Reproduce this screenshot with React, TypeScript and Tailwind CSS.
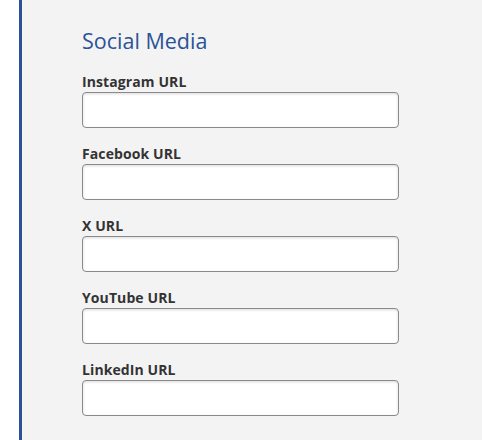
const fields = ["Instagram URL", "Facebook URL", "X URL", "YouTube URL", "LinkedIn URL"];

export default function App() {
  return (
    <div className="flex h-[440px] w-[482px] overflow-hidden bg-white font-['Open_Sans',sans-serif]">
      <div className="ml-[19px] h-full w-[3px] bg-[#2b5297]" />
      <div className="h-full flex-1 bg-[#f3f3f3] pl-[60px] pt-[26px]">
        <h2 className="text-[21.5px] leading-[30px] text-[#2b5297]">Social Media</h2>
        <div className="mt-[16px] flex flex-col gap-[16px]">
          {fields.map((f) => (
            <div key={f} className="flex flex-col">
              <label className="text-[14px] font-bold leading-[19px] tracking-[0.1px] text-[#333]">{f}</label>
              <input
                type="text"
                className="mt-[1px] h-[36px] w-[317px] rounded-[4px] border border-[#8a8a8a] bg-white shadow-[inset_0_1px_3px_rgba(0,0,0,0.15)] outline-none"
              />
            </div>
          ))}
        </div>
      </div>
    </div>
  );
}
